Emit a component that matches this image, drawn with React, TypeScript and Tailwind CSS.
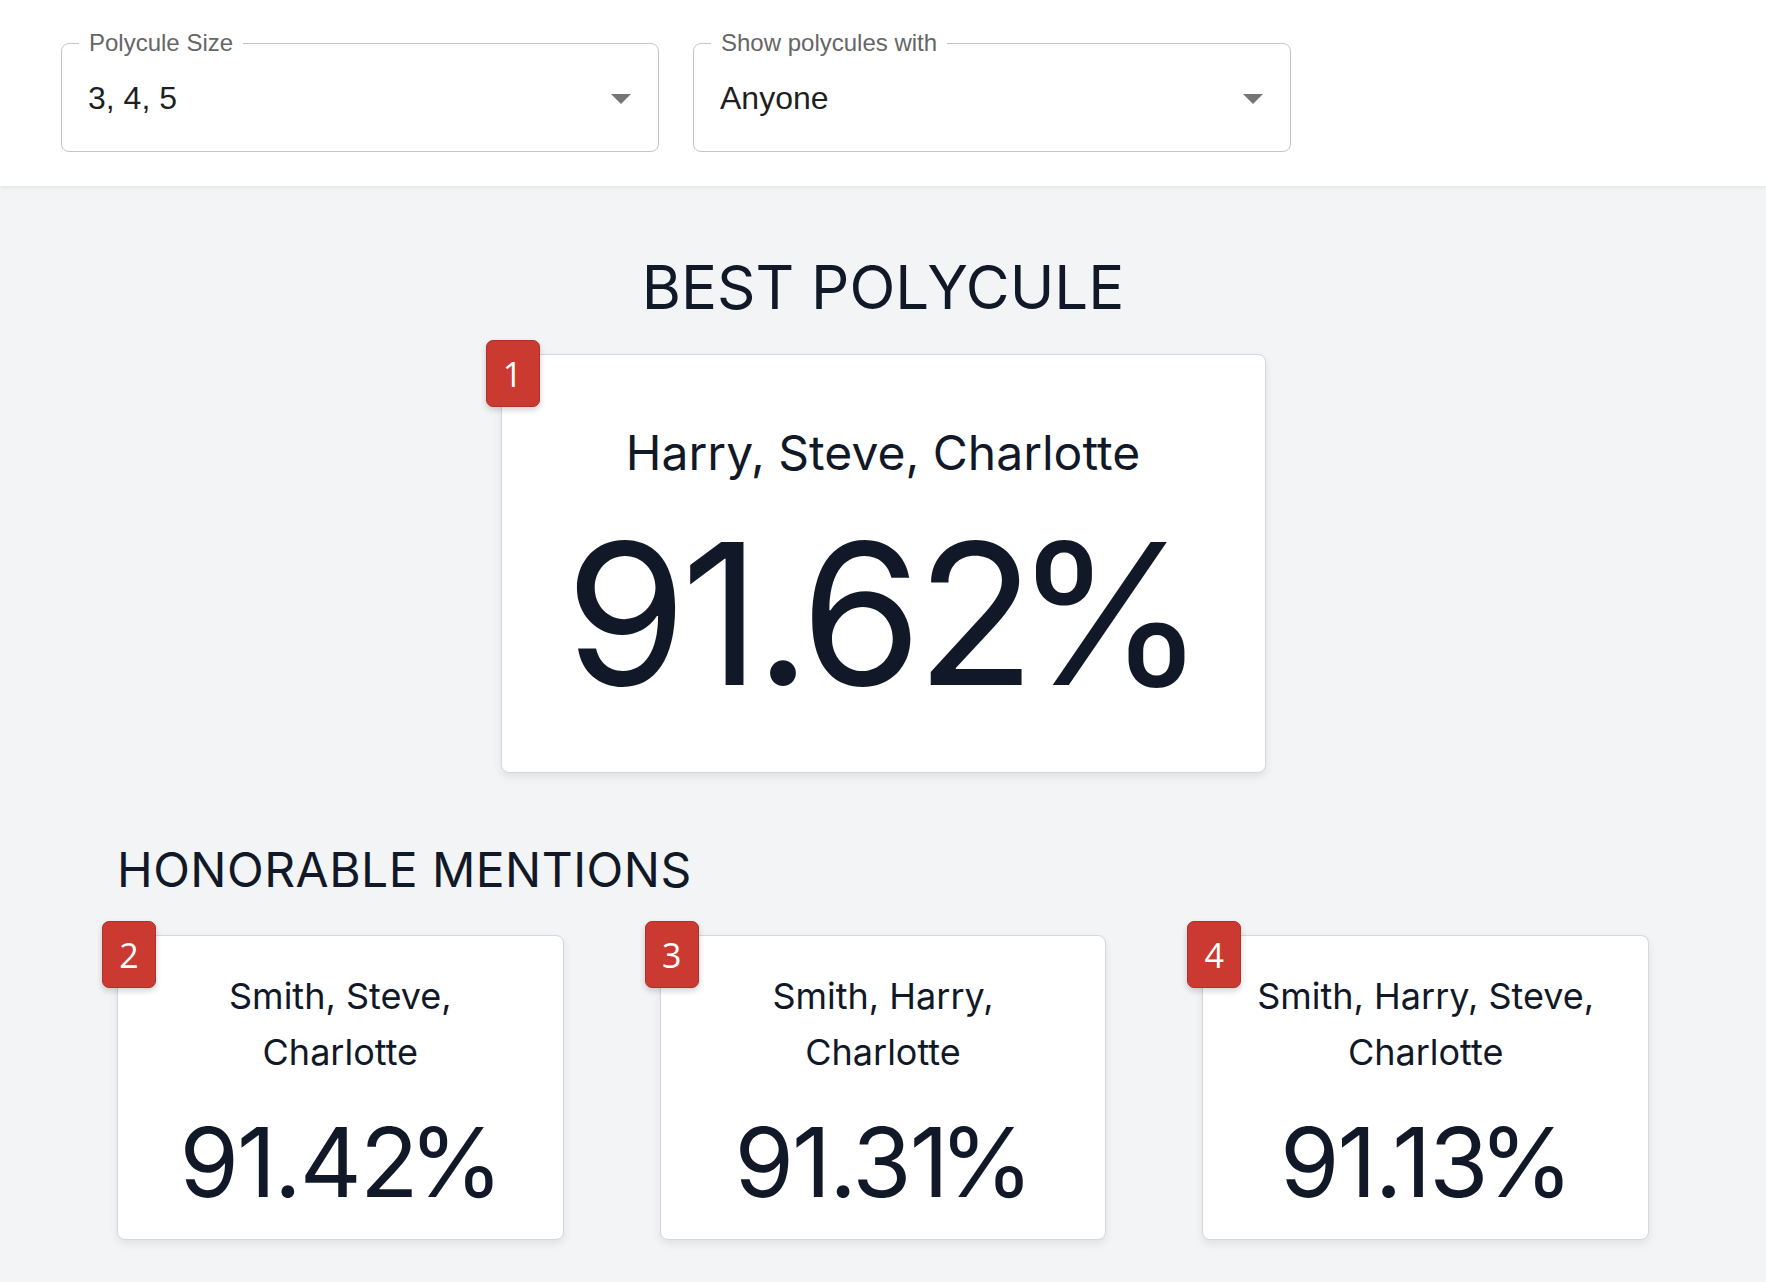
import React from "react";

type Mention = { rank: number; names: string; score: string };

const mentions: Mention[] = [
  { rank: 2, names: "Smith, Steve, Charlotte", score: "91.42" },
  { rank: 3, names: "Smith, Harry, Charlotte", score: "91.31" },
  { rank: 4, names: "Smith, Harry, Steve, Charlotte", score: "91.13" },
];

function OutlinedSelect({ label, value }: { label: string; value: string }) {
  return (
    <div className="relative flex h-[109px] w-[598px] items-center rounded-[8px] border border-[#c4c4c4] bg-white pl-[26px] pr-[13px] font-['Liberation_Sans',Arial,sans-serif]">
      <span className="absolute left-[17px] top-[-13px] bg-white px-[10px] text-[24px] leading-none text-[#666666]">
        {label}
      </span>
      <span className="flex-1 text-[32px] leading-none text-[#1f1f1f]">{value}</span>
      <svg viewBox="0 0 24 24" className="h-[48px] w-[48px] fill-[#757575]">
        <path d="M7 10l5 5 5-5z" />
      </svg>
    </div>
  );
}

function RankBadge({ rank }: { rank: number }) {
  return (
    <div className="absolute -left-[16px] -top-[15px] flex h-[67px] w-[54px] items-center justify-center rounded-[7px] border border-[#b0302a] bg-[#ca3a31] font-['Open_Sans',sans-serif] text-[34px] leading-none text-white shadow-[0_3px_6px_rgba(0,0,0,0.18)]">
      {rank}
    </div>
  );
}

// Inter's % sits loose; pull it in a bit
function Score({ value }: { value: string }) {
  return (
    <>
      {value}
      <span className="ml-[-0.08em]">%</span>
    </>
  );
}

export default function App() {
  return (
    <div className="min-h-screen bg-[#f3f4f6] font-['Inter',sans-serif] text-[#111827]">
      {/* filters */}
      <header className="relative z-10 flex gap-[34px] bg-white pb-[34px] pl-[61px] pt-[43px] shadow-[0_2px_4px_rgba(0,0,0,0.07)]">
        <OutlinedSelect label="Polycule Size" value="3, 4, 5" />
        <OutlinedSelect label="Show polycules with" value="Anyone" />
      </header>

      <main className="mx-auto w-[1532px] pb-[40px] pt-[71px]">
        <h1 className="text-center text-[60px] leading-none">BEST POLYCULE</h1>

        <div className="mt-[37px] flex justify-center">
          <div className="relative w-[765px] rounded-[8px] border border-[#d4d7dd] bg-white px-[40px] pb-[60px] pt-[74px] text-center shadow-[0_4px_8px_rgba(0,0,0,0.08)]">
            <RankBadge rank={1} />
            <p className="text-[48px] leading-none">Harry, Steve, Charlotte</p>
            <p className="mt-[39px] text-[196px] leading-none tracking-[-0.03em]">
              <Score value="91.62" />
            </p>
          </div>
        </div>

        <h2 className="mt-[73px] text-[48px] leading-none tracking-[0.01em]">HONORABLE MENTIONS</h2>

        <div className="mt-[41px] grid grid-cols-3 gap-[96px]">
          {mentions.map((m) => (
            <div
              key={m.rank}
              className="relative rounded-[8px] border border-[#d4d7dd] bg-white px-[40px] pb-[29px] pt-[32px] text-center shadow-[0_4px_8px_rgba(0,0,0,0.08)]"
            >
              <RankBadge rank={m.rank} />
              <p className="text-[36px] leading-[56px]">{m.names}</p>
              <p className="mt-[34px] text-[96px] leading-none tracking-[-0.02em]">
                <Score value={m.score} />
              </p>
            </div>
          ))}
        </div>
      </main>
    </div>
  );
}
